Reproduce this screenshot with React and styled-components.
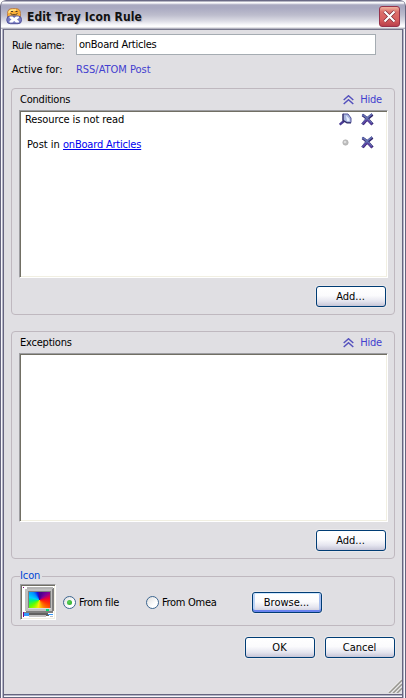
import React from "react";
import styled, { createGlobalStyle, css } from "styled-components";

const Global = createGlobalStyle`
  *, *::before, *::after { box-sizing: border-box; }
  body { margin: 0; background: #fff; overflow: hidden; }
  svg { display: block; flex: none; }
`;

const Window = styled.main`
  width: 406px;
  height: 698px;
  display: flex;
  flex-direction: column;
  border-radius: 6px 6px 0 0;
  overflow: hidden;
  background: #e0dfe3;
  color: #000;
  font: 11px/14px "DejaVu Sans Condensed", "DejaVu Sans", sans-serif;
  font-stretch: condensed;
  white-space: nowrap;
`;

const TitleBar = styled.header`
  height: 29px;
  flex: none;
  display: flex;
  align-items: flex-start;
  padding: 6px 5px 0 5px;
  background: linear-gradient(#5d5d7c 0, #77778f 1px, #f4f4f8 2px, #fff 3px, #c6c6d6 4px, #a9a9c0 5px, #a9a9c1 8px, #bdbdcd 15px, #dcdce5 21px, #f9f9fb 25px, #fff 27px, #c7c7d0 28px, #a0a0af 29px);
  border: solid #66667f;
  border-width: 0 1px;
  border-radius: 6px 6px 0 0;
`;

const Title = styled.h1`
  flex: 1;
  margin: 3px 0 0 4px;
  color: #111;
  font: bold 12px/16px "DejaVu Sans Condensed", "DejaVu Sans", sans-serif;
  font-stretch: condensed;
  letter-spacing: ${(p) => p.$spacing}px;
  text-shadow: 1px 1px 1px #b4b4c4;
`;

const CloseButton = styled.button`
  width: 21px;
  height: 21px;
  padding: 3px;
  border: 1px solid #97324a;
  border-radius: 3px;
  background: linear-gradient(#f0b5a0, #db6f6b 25%, #d9605f 65%, #b9404b);
`;

const Frame = styled.div`
  flex: 1;
  padding: 0 4px 4px;
  background: linear-gradient(90deg, #66667f 0 1px, #f8f8fb 1px 2px, #b4b4c8 2px 3px, #66667f 3px 4px, transparent 4px 402px, #66667f 402px 403px, #b4b4c8 403px 404px, #f8f8fb 404px 405px, #66667f 405px);
`;

const Body = styled.div`
  position: relative;
  height: 665px;
  padding: 4px 7px 0;
  background: #e0dfe3;
  border-top: 1px solid #77778c;
  box-shadow: 0 1px #66667f, 0 2px #b4b4c8, 0 3px #f8f8fb, 0 4px #66667f;
`;

const Text = styled.span`
  letter-spacing: ${(p) => p.$spacing || 0}px;
  color: ${(p) => p.$color || "#000"};
`;

const Field = styled.div`
  display: grid;
  grid-template-columns: 64px 300px;
  align-items: center;
  padding-left: 1px;
  height: ${(p) => p.$height}px;
  & > span { padding-top: ${(p) => p.$drop || 0}px; }
`;

const Input = styled.input`
  width: 300px;
  height: 21px;
  padding: 0 2px 1px;
  border: 1px solid #a5acb2;
  background: #fff;
  font: inherit;
  letter-spacing: ${(p) => p.$spacing}px;
  outline: 0;
`;

const Group = styled.section`
  height: ${(p) => p.$height}px;
  margin-top: ${(p) => p.$top}px;
  padding: 4px 7px 0 8px;
  border: 1px solid #bfb8bf;
  border-radius: 4px;
`;

const GroupHeader = styled.header`
  height: 17px;
  display: flex;
  align-items: flex-start;
  justify-content: space-between;
  padding: 0 5px 0 0;
`;

const HideLink = styled.a`
  display: flex;
  align-items: center;
  gap: 6px;
`;

const List = styled.div`
  height: ${(p) => p.$height}px;
  width: 369px;
  margin-left: -1px;
  background: #fff;
  border: 1px solid;
  border-color: #9d9da1 #fff #fff #9d9da1;
  box-shadow: inset 1px 1px #716f64, inset -1px -1px #f1efe2;
`;

const Condition = styled.div`
  display: grid;
  grid-template-columns: 1fr 15px 14px;
  column-gap: 7px;
  align-items: center;
  height: ${(p) => p.$height}px;
  padding: 0 12px 0 ${(p) => p.$indent}px;
`;

const ConditionText = styled.span`
  padding-top: ${(p) => p.$drop}px;
`;

const Link = styled.a`
  color: #0000f0;
  text-decoration: underline;
  text-underline-offset: 1px;
  letter-spacing: ${(p) => p.$spacing}px;
`;

const Actions = styled.div`
  display: flex;
  justify-content: flex-end;
  gap: 10px;
  padding: ${(p) => p.$pad};
`;

const Button = styled.button`
  width: 70px;
  height: 21px;
  padding: 1px 1px 0 0;
  border: 1px solid #003c74;
  border-radius: 3px;
  background: linear-gradient(#fff, #fbfbfd 45%, #e5e5ef 75%, #c6c5d7);
  font: inherit;
  color: #000;
  box-shadow: 0 0 0 1px #e9e8eb;
  ${(p) => p.$focused && css`
    box-shadow: 0 0 0 1px #e9e8eb, inset 0 -2px #6982ee, inset 0 1px #cee7ff, inset 2px 0 #bcd4f6, inset -2px 0 #a4bdf0;
  `}
`;

const IconGroup = styled.fieldset`
  height: 57px;
  margin: 10px 0 0;
  padding: 0 0 0 8px;
  min-width: 0;
  border: 1px solid #bfb8bf;
  border-radius: 4px;
`;

const Legend = styled.legend`
  padding: 0 2px 0 0;
  line-height: 14px;
  color: #0046d5;
  letter-spacing: ${(p) => p.$spacing}px;
`;

const IconRow = styled.div`
  display: grid;
  grid-template-columns: 43px 83px 106px 70px;
  align-items: center;
  height: 36px;
  margin-top: 1px;
`;

const Preview = styled.div`
  width: 36px;
  height: 36px;
  border: 1px solid;
  border-color: #9d9da1 #fff #fff #9d9da1;
  box-shadow: inset 1px 1px #716f64, inset -1px -1px #f1efe2;
  background: #e0dfe3;
  padding: 1px;
`;

const Wheel = styled.div`
  width: 21px;
  height: 16px;
  background: conic-gradient(#4a0090, #4a0090 15deg, #80009a 50deg, #f00030 80deg, #ff3000 110deg, #ff8000 150deg, #ffee00 190deg, #60ff00 235deg, #00f080 265deg, #00d0ff 285deg, #008cff 320deg, #1010e0 345deg, #4a0090);
`;

const Option = styled.label`
  display: flex;
  align-items: center;
  gap: 3px;
  & > span:last-child { padding-top: 1px; }
`;

const Radio = styled.span`
  width: 13px;
  height: 13px;
  flex: none;
  display: grid;
  place-items: center;
  border: 1px solid #3c6690;
  border-radius: 50%;
  background: linear-gradient(135deg, #dedede, #fff 65%);
  &::after {
    content: "";
    width: 5px;
    height: 5px;
    border-radius: 50%;
    background: ${(p) => (p.$checked ? "radial-gradient(circle at 40% 40%, #5cd65a, #20a020)" : "transparent")};
  }
`;

const Grip = styled.div`
  position: absolute;
  right: 0;
  bottom: 1px;
`;

const AppIcon = () => (
  <svg width="17" height="19" viewBox="0 0 17 19">
    <path d="M1.500 11V7.500Q1.500 2.500 6.500 2.500H9.500Q14.500 2.500 14.500 7.500V11Z" fill="#f8ad38" stroke="#b98050" />
    <path d="M3 7Q3 4 7 4h3" fill="none" stroke="#ffe88e" strokeWidth="1.400" />
    <path d="M5 5.500h2M9.500 5.500h2M4.500 7.500l2 1.200h3l2-1.200" fill="none" stroke="#503b24" />
    <rect x=".8" y="10" width="14.700" height="7.700" rx="3.500" fill="#777bc2" stroke="#50529a" />
    <path d="M3.500 10.500h3l1.700 1.500 1.700-1.500h3v1.500l-2 1.500 2 1.500v1.500h-3L8.200 15l-1.700 1.500h-3V15l2-1.500-2-1.500Z" fill="#fff" />
  </svg>
);

const Chevron = () => (
  <svg width="11" height="10" viewBox="0 0 11 10">
    <path d="M.7 5 5.500.8 10.300 5M.7 9 5.500 4.800 10.300 9" fill="none" stroke="#5451bd" strokeWidth="1.500" />
  </svg>
);

const PinIcon = () => (
  <svg width="14" height="13" viewBox="0 0 14 13">
    <path d="M.7 11.700 5 8" stroke="#4a3b94" strokeWidth="2.400" />
    <path d="M4 1h5l3 4v4.500H8L4 7Z" fill="#a9b5df" stroke="#53549b" />
    <path d="M4 .8v6.700l4 2.500h4" fill="none" stroke="#2c2862" strokeWidth="1.100" />
    <path d="M7 2.500 10.500 6v2H8Z" fill="#e7efff" />
  </svg>
);

const DeleteIcon = () => (
  <svg width="13" height="13" viewBox="0 0 13 13">
    <path d="M1.500 2Q5 4 11.500 11.500M11.500 1.500Q5 6 1.500 11.500" fill="none" stroke="#2f2269" strokeWidth="3" />
    <path d="M1 1.500Q5 3.500 11 10.500M11 1Q5 5 1.500 11" fill="none" stroke="#6370b2" strokeWidth="1.600" />
    <path d="M6 7 11 11.500M5.500 7 2 11" fill="none" stroke="#5b3fa0" strokeWidth="1.500" />
  </svg>
);

const DotIcon = () => (
  <svg width="14" height="13" viewBox="0 0 14 13">
    <circle cx="6.500" cy="6.500" r="2.700" fill="#bdbdbd" stroke="#a9a9a9" strokeWidth=".6" />
    <circle cx="6" cy="6" r="1.300" fill="#ddd" />
  </svg>
);

const PreviewArt = styled.div`
  position: relative;
  width: 32px;
  height: 32px;
`;

const ScreenLayer = styled.div`
  position: absolute;
  left: 7px;
  top: 6px;
`;

const ComputerIcon = () => (
  <PreviewArt>
    <svg width="32" height="32" shapeRendering="crispEdges">
      <path fill="#fff" d="M0 0h32v32H0z" />
      <path fill="#800080" d="M1 1h1v1H1z" />
      <path fill="#c0c0c0" d="M3 3h27v22H3z" />
      <path fill="#808080" d="M6 5h23v18H6zM30 2h2v23h-2z" />
      <path fill="#b4b4b4" d="M5 1h26v2H5z" />
      <path fill="#dcdcdc" d="M6 22h23v1H6z" />
      <path fill="#00e070" d="M24 23h3v2h-3z" />
      <path fill="#808080" d="M4 25h27v2H2v-1h2z" />
      <path fill="#606060" d="M1 27h30v3H1z" />
      <path fill="#800080" d="M1 26h1v5H1z" />
      <path fill="#3399ff" d="M2 27h5v3H2zM26 28h5v1h-5z" />
      <path fill="#fff" d="M26 27h5v1h-5zM27 29h4v1h-4z" />
      <path fill="#c0c0c0" d="M7 29h17v2H7zM28 30h3v1h-3z" />
    </svg>
    <ScreenLayer><Wheel /></ScreenLayer>
  </PreviewArt>
);

const Hide = () => (
  <HideLink>
    <Chevron />
    <Text $color="#4340cf" $spacing={-0.2}>Hide</Text>
  </HideLink>
);

export default function App() {
  return (
    <Window>
      <Global />
      <TitleBar>
        <AppIcon />
        <Title $spacing={0.1}>Edit Tray Icon Rule</Title>
        <CloseButton aria-label="Close">
          <svg width="13" height="13" viewBox="0 0 13 13">
            <path d="m1.500 1.500 10 10m0-10-10 10" stroke="#782a35" strokeWidth="3.500" />
            <path d="m1.500 1.500 10 10m0-10-10 10" stroke="#fff" strokeWidth="2.200" />
          </svg>
        </CloseButton>
      </TitleBar>
      <Frame>
        <Body>
          <Field $height={21} $drop={2}>
            <Text $spacing={-0.35}>Rule name:</Text>
            <Input $spacing={-0.25} defaultValue="onBoard Articles" />
          </Field>
          <Field $height={29}>
            <Text>Active for:</Text>
            <Text $color="#4340cf" $spacing={-0.03}>RSS/ATOM Post</Text>
          </Field>
          <Group $height={227} $top={4}>
            <GroupHeader><Text $spacing={-0.22}>Conditions</Text><Hide /></GroupHeader>
            <List $height={168}>
              <Condition $indent={5} $height={17}>
                <Text $spacing={-0.1}>Resource is not read</Text><PinIcon /><DeleteIcon />
              </Condition>
              <Condition $indent={7} $height={28}>
                <ConditionText $drop={6}><Text>Post in </Text><Link $spacing={-0.2}>onBoard Articles</Link></ConditionText><DotIcon /><DeleteIcon />
              </Condition>
            </List>
            <Actions $pad="8px 1px 0 0"><Button>Add...</Button></Actions>
          </Group>
          <Group $height={228} $top={16}>
            <GroupHeader><Text $spacing={-0.22}>Exceptions</Text><Hide /></GroupHeader>
            <List $height={169} />
            <Actions $pad="8px 1px 0 0"><Button>Add...</Button></Actions>
          </Group>
          <IconGroup>
            <Legend $spacing={-0.1}>Icon</Legend>
            <IconRow>
              <Preview><ComputerIcon /></Preview>
              <Option><Radio $checked /><Text $spacing={-0.3}>From file</Text></Option>
              <Option><Radio /><Text $spacing={-0.3}>From Omea</Text></Option>
              <Button $focused>Browse...</Button>
            </IconRow>
          </IconGroup>
          <Actions $pad="11px 0 0"><Button>OK</Button><Button>Cancel</Button></Actions>
          <Grip>
            <svg width="14" height="14" viewBox="0 0 14 14">
              <path d="M1 14 14 1M5 14l9-9M9 14l5-5" stroke="#9a9992" strokeWidth="1.800" />
              <path d="M0 13.500 13.500 0M4 13.500 14 3.500M8 13.500l6-6" stroke="#fff" strokeWidth=".8" />
            </svg>
          </Grip>
        </Body>
      </Frame>
    </Window>
  );
}
